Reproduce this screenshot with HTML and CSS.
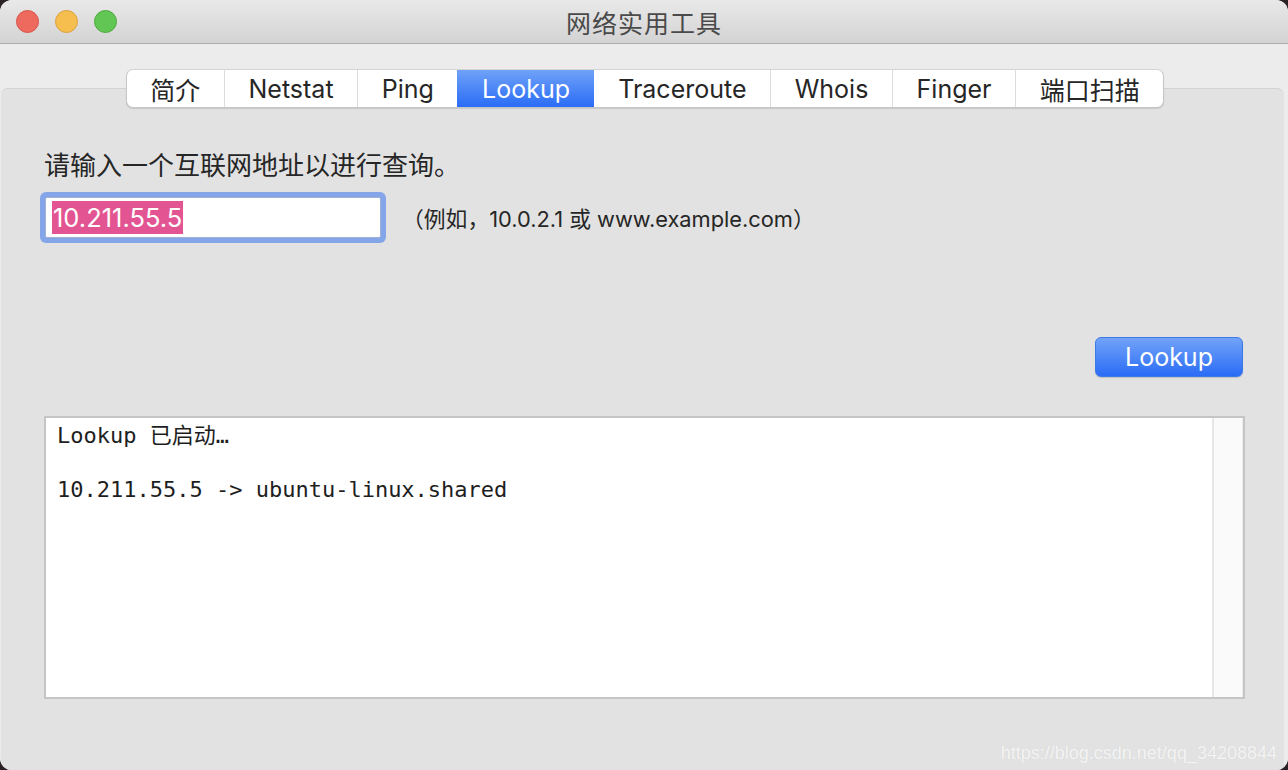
FILE: index.html
```html
<!DOCTYPE html>
<html lang="zh-CN">
<head>
  <meta charset="UTF-8" />
  <title>网络实用工具</title>
  <link rel="stylesheet" href="styles.css">
</head>
<body>

<div class="window">
  <header class="titlebar">
    <div class="lights">
      <span class="light red"></span>
      <span class="light yellow"></span>
      <span class="light green"></span>
    </div>
    <h1>网络实用工具</h1>
  </header>

  <main class="content">
    <nav class="tabs">
      <button class="tab">简介</button>
      <button class="tab">Netstat</button>
      <button class="tab">Ping</button>
      <button class="tab active">Lookup</button>
      <button class="tab">Traceroute</button>
      <button class="tab">Whois</button>
      <button class="tab">Finger</button>
      <button class="tab">端口扫描</button>
    </nav>

    <section class="panel">
      <p class="prompt">请输入一个互联网地址以进行查询。</p>
      <div class="input-row">
        <div class="field"><span class="selected">10.211.55.5</span></div>
        <span class="hint">（例如，10.0.2.1 或 www.example.com）</span>
      </div>
      <div class="actions">
        <button class="primary">Lookup</button>
      </div>
      <div class="output">
        <pre class="log">Lookup 已启动…

10.211.55.5 -&gt; ubuntu-linux.shared</pre>
        <div class="scrollbar"></div>
      </div>
    </section>
  </main>

  <span class="watermark">https://blog.csdn.net/qq_34208844</span>
</div>

</body>
</html>
```

FILE: styles.css
```css
body {
  margin: 0;
  background: #2a2226;
  font-family: "Inter", "Noto Sans CJK SC", sans-serif;
  color: #262626;
}
.window {
  position: relative;
  width: 1288px;
  height: 770px;
  display: flex;
  flex-direction: column;
  border-radius: 12px;
  overflow: hidden;
  background: #e2e2e2;
}
.titlebar {
  position: relative;
  height: 43px;
  flex-shrink: 0;
  display: flex;
  align-items: center;
  justify-content: center;
  background: linear-gradient(#e9e9e9, #d3d3d3);
  border-bottom: 1px solid #adadad;
}
.titlebar h1 {
  margin: 0;
  font-size: 25px;
  font-weight: normal;
  letter-spacing: 1px;
  color: #4a4a4a;
}
.lights {
  position: absolute;
  left: 16px;
  top: 10px;
  display: flex;
  gap: 16px;
}
.light {
  width: 23px;
  height: 23px;
  border-radius: 50%;
  box-sizing: border-box;
}
.red { background: #ee6a5f; border: 1px solid #d75449; }
.yellow { background: #f6be4f; border: 1px solid #d9a03c; }
.green { background: #62c655; border: 1px solid #4fa73f; }

.content {
  flex: 1;
  display: flex;
  flex-direction: column;
  background: #ececec;
  padding-top: 25px;
}
.tabs {
  position: relative;
  z-index: 1;
  align-self: center;
  display: flex;
  height: 39px;
  margin-left: 2px;
  margin-bottom: -20px;
  background: #fff;
  border: 1px solid #c6c6c6;
  border-top-color: #d4d4d4;
  border-radius: 7px;
  box-shadow: 0 1px 1px rgba(0, 0, 0, 0.12);
  box-sizing: border-box;
  overflow: hidden;
}
.tab {
  padding: 0 23.6px;
  border: none;
  border-left: 1px solid #dcdcdc;
  background: none;
  font-family: inherit;
  font-size: 25px;
  color: #262626;
}
.tab:first-child {
  border-left: none;
}
.tab.active {
  border-left-color: transparent;
  background: linear-gradient(#6fa2f8, #2a6cf6);
  color: #fff;
}
.tab.active + .tab {
  border-left-color: transparent;
}

.panel {
  flex: 1;
  margin: 0 4px 0 1px;
  padding: 62px 41px 0 43px;
  background: #e2e2e2;
  border-top: 1px solid #d2d2d2;
  border-radius: 7px 7px 0 0;
}
.prompt {
  margin: 0;
  font-size: 26px;
  line-height: 30px;
}
.input-row {
  display: flex;
  align-items: center;
  gap: 21px;
  margin-top: 16px;
}
.field {
  width: 336px;
  height: 41px;
  box-sizing: border-box;
  padding: 3px 6px;
  background: #fff;
  border: 1px solid #9fb2d6;
  box-shadow: 0 0 0 5px #84a6e8;
  border-radius: 2px;
  margin-left: 1px;
}
.selected {
  display: inline-block;
  height: 33px;
  line-height: 33px;
  padding: 0 1px;
  background: #e25592;
  color: #fff;
  font-size: 25.5px;
}
.hint {
  font-size: 21.8px;
}
.actions {
  display: flex;
  justify-content: flex-end;
  margin-top: 99px;
}
.primary {
  width: 148px;
  height: 40px;
  border: 1px solid #3c7ae8;
  border-radius: 6px;
  background: linear-gradient(#72a3f8, #2a6cf6);
  box-shadow: 0 1px 1px rgba(0, 0, 0, 0.15);
  color: #fff;
  font-family: inherit;
  font-size: 25px;
}
.output {
  display: flex;
  height: 283px;
  margin-top: 39px;
  margin-right: -2px;
  box-sizing: border-box;
  border: 2px solid #c5c5c5;
  background: #fff;
}
.log {
  flex: 1;
  margin: 0;
  padding: 4px 11px;
  font-family: "DejaVu Sans Mono", "Noto Sans CJK SC", monospace;
  font-size: 22px;
  line-height: 27px;
  color: #1e1e1e;
}
.scrollbar {
  width: 28px;
  background: #fafafa;
  border-left: 2px solid #e6e6e6;
  border-right: 1px solid #ededed;
}
.watermark {
  position: absolute;
  right: 11px;
  bottom: 6px;
  font-family: "Liberation Sans", sans-serif;
  font-size: 18px;
  color: #f4f4f4;
  text-shadow: 0 0 1px #d0d0d0;
}
```
